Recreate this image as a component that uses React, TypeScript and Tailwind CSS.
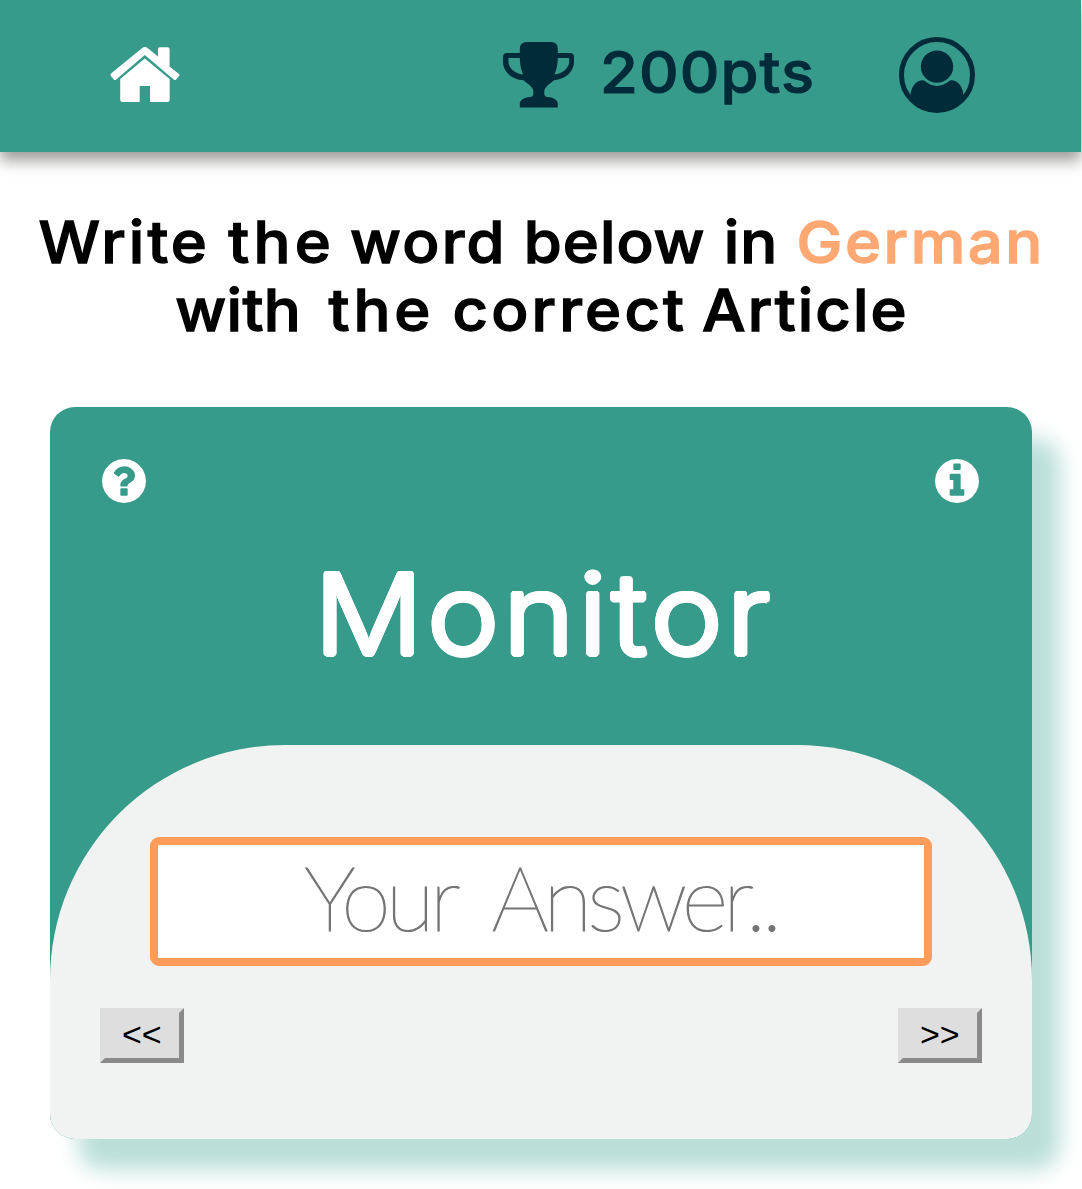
import React from 'react';

const CIRCLE =
  'M1536 768q0 209-103 385.5t-279.5 279.5-385.5 103-385.5-103-279.5-279.5-103-385.5 103-385.5 279.5-279.5 385.5-103 385.5 103 279.5 279.5 103 385.5z';

const QUESTION =
  'M896 1248v-192q0-14-9-23t-23-9h-192q-14 0-23 9t-9 23v192q0 14 9 23t23 9h192q14 0 23-9t9-23zm256-672q0-88-55.5-163t-138.5-116-170-41q-243 0-371 213-15 24 8 42l132 100q7 6 19 6 16 0 25-12 53-68 86-92 34-24 86-24 48 0 85.5 26t37.5 59q0 38-20 61t-68 45q-63 28-115.5 86.5t-52.5 125.5v36q0 14 9 23t23 9h192q14 0 23-9t9-23q0-19 21.5-49.5t54.5-49.5q32-18 49-28.5t46-35 44.5-48 28-60.5 12.5-81z';

const INFO =
  'M1024 1248v-160q0-14-9-23t-23-9h-96v-512q0-14-9-23t-23-9h-320q-14 0-23 9t-9 23v160q0 14 9 23t23 9h96v320h-96q-14 0-23 9t-9 23v160q0 14 9 23t23 9h448q14 0 23-9t9-23zm-128-896v-160q0-14-9-23t-23-9h-192q-14 0-23 9t-9 23v160q0 14 9 23t23 9h192q14 0 23-9t9-23z';

function BadgeIcon({ glyph }: { glyph: string }) {
  return (
    <svg viewBox="0 0 1536 1536" className="size-[44px]">
      <path d={CIRCLE} fill="white" />
      <path d={glyph} fill="#369b8a" />
    </svg>
  );
}

function HomeIcon() {
  return (
    <svg viewBox="110 47 70 55" className="h-[55px] w-[70px] shrink-0" fill="white">
      <path d="M144.800 58.500 169.700 79V99.500a2.500 2.500 0 0 1-2.500 2.500H150V86h-10.300v16h-17a2.500 2.500 0 0 1-2.500-2.500V79Z" />
      <path d="M111 73.500 142 48.200q2.900-2.200 5.800 0L158 56.500V49.200q0-1.900 1.900-1.900h7.800q1.900 0 1.900 1.900v17.200l9.300 7.500q1.100 1 .2 2.200l-3 3.400q-1 1.100-2.100.2L144.800 55 115.900 79.700q-1.100.9-2.100-.2l-3-3.600q-.8-1.300.2-2.400Z" />
    </svg>
  );
}

function TrophyIcon() {
  return (
    <svg viewBox="503 42 71 66" className="h-[66px] w-[71px] shrink-0" fill="#022b3a">
      <path
        fillRule="evenodd"
        d="M527 42h24q6.800 0 6.800 7v4h12.200q4 0 4 4v5c0 9-8 17.500-20 18.200-2.500 2.400-8.800 6-9.500 9.800-.8 4.500 0 7 3 7 6.500.5 10.300 3 10.300 7v3.500h-38V104c0-4 3.800-6.500 10.300-7 3 0 3.800-2.500 3-7-.7-3.800-7-7.400-9.500-9.800C511 79.500 503 71 503 62v-5q0-4 4-4h12.800v-4q0-7 7.200-7ZM519.800 58H508.500v4c0 6 6.500 11.600 14.500 12.500-2-5-3.100-10-3.200-16.500ZM557.800 58c-.1 6.500-1.200 11.500-3.200 16.500 8-.9 14.500-6.500 14.500-12.500v-4Z"
      />
    </svg>
  );
}

function UserIcon() {
  return (
    <svg viewBox="899 37 76 76" className="size-[76px] shrink-0">
      <circle cx="937" cy="75" r="35.500" fill="none" stroke="#022b3a" strokeWidth="5" />
      <circle cx="937" cy="66.600" r="16.200" fill="#022b3a" />
      <path
        fill="#022b3a"
        d="M910.500 95C911.500 87 915 80.500 923 80.300q1 0 1.800.8 12.200 9.800 24.400 0 .8-.8 1.800-.8c8 .2 11.500 6.700 12.500 14.700L966 95c-8 22-50 22-58 0Z"
      />
    </svg>
  );
}

const NAV_BUTTON =
  "h-[55px] w-[84.500px] border-[5px] border-b-[#8a8a8a] border-l-[#dedede] border-r-[#8a8a8a] border-t-[#dedede] bg-[#dedede] pb-[3px] font-['Liberation_Sans',sans-serif] text-[34px] leading-none";

export default function App() {
  return (
    <div className="h-[1189px] w-[1082px] overflow-hidden bg-white font-['Inter',sans-serif] text-black">
      <header className="flex h-[152px] w-[1081px] items-start bg-[#369b8a] shadow-[0_8px_15px_#989694]">
        <div className="ml-[110px] mt-[47px]">
          <HomeIcon />
        </div>
        <div className="ml-[323px] mt-[42px]">
          <TrophyIcon />
        </div>
        <div className="ml-[26px] mt-[37px] w-[298px] origin-left scale-x-[1.06] whitespace-nowrap text-[58px] font-medium leading-[70px] tracking-[1px] text-[#022b3a] [-webkit-text-stroke:1px_#022b3a]">
          200pts
        </div>
        <div className="ml-[1px] mt-[37px]">
          <UserIcon />
        </div>
      </header>

      <h1 className="mt-[56px] flex flex-col items-center text-[58px] font-medium leading-[68px] [-webkit-text-stroke:1.300px_currentColor]">
        <span className="flex w-[945px] scale-x-[1.06] justify-between whitespace-nowrap">
          <span className="-ml-[2px] -mr-[0.900px] tracking-[2.900px]">Write</span>
          <span className="-mr-[4.100px] tracking-[4.100px]">the</span>
          <span className="-mr-[2.100px] tracking-[2.100px]">word</span>
          <span className="-mr-[1px] tracking-[1px]">below</span>
          <span className="-mr-[1px] tracking-[1px]">in</span>
          <span className="-mr-[2.400px] tracking-[2.400px] text-[#ffa873]">German</span>
        </span>
        <span className="flex w-[690px] scale-x-[1.06] justify-between whitespace-nowrap">
          <span className="tracking-[0.300px]">with</span>
          <span className="-mr-[3.600px] ml-[5px] tracking-[3.600px]">the</span>
          <span className="-mr-[7px] tracking-[3px]">correct</span>
          <span className="-mr-[2px] tracking-[2px]">Article</span>
        </span>
      </h1>

      <main className="ml-[50px] mt-[63px] flex h-[732px] w-[981.500px] flex-col overflow-hidden rounded-[25px] bg-[#369b8a] shadow-[28px_31px_22px_#badfd8]">
        <div className="ml-[52px] mr-[53px] mt-[52px] flex h-11 justify-between">
          <BadgeIcon glyph={QUESTION} />
          <BadgeIcon glyph={INFO} />
        </div>
        <div className="mt-[40px] h-[142px] scale-x-[1.085] whitespace-nowrap pl-[7px] text-center text-[111px] font-light leading-[142px] tracking-[4.200px] text-white [text-shadow:2.300px_0_white,2px_1.200px_white,1.200px_2.200px_white,0_2.500px_white,-1.200px_2.200px_white,-2px_1.200px_white,-2.300px_0_white,-2px_-1.200px_white,-1.200px_-2.200px_white,0_-2.500px_white,1.200px_-2.200px_white,2px_-1.200px_white]">
          Monitor
        </div>
        <section className="mt-[60px] flex-1 rounded-t-[235px] bg-[#f1f3f2] pt-[92px]">
          <input
            className="mx-auto block h-[129px] w-[782.500px] rounded-[9px] border-8 border-[#ff9b5b] bg-white pb-[10px] text-center font-['Lato',sans-serif] text-[90px] font-thin tracking-[-5px] text-[#757575] outline-none [-webkit-text-stroke:1.200px_#757575] [word-spacing:20px] placeholder:text-[#757575]"
            placeholder="Your Answer.."
          />
          <div className="mx-[49.500px] mt-[42px] flex justify-between">
            <button className={NAV_BUTTON}>&lt;&lt;</button>
            <button className={NAV_BUTTON}>&gt;&gt;</button>
          </div>
        </section>
      </main>
    </div>
  );
}
